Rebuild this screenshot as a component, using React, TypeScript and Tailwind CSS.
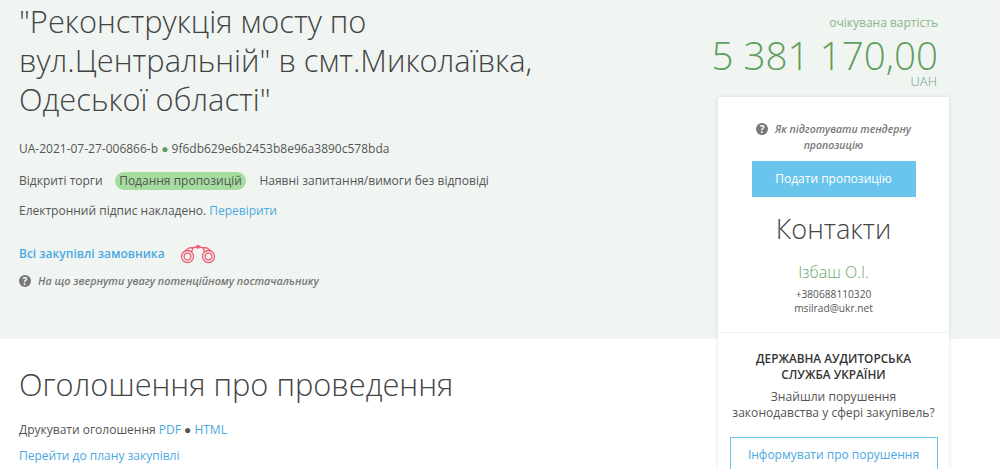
export default function App() {
  const font = { fontFamily: '"Open Sans", sans-serif' };
  return (
    <div style={font} className="w-[1000px] h-[469px] overflow-hidden bg-white text-[#555] relative">
      <div className="h-[339px] bg-[#f0f5f2] flex justify-between pl-[19px]">
        <div className="w-[600px]">
          <h1 className="mt-[2px] w-[530px] text-[30.8px] leading-[39px] font-light text-[#444]">"Реконструкція мосту по вул.Центральній" в смт.Миколаївка, Одеської області"</h1>
          <div className="mt-[21px] text-[12px] leading-[18px]">UA-2021-07-27-006866-b <span className="text-[#5c9e5c]">●</span> 9f6db629e6b2453b8e96a3890c578bda</div>
          <div className="mt-[14px] flex items-center text-[12px] leading-[18px]">
            <span>Відкриті торги</span>
            <span className="ml-[12px] bg-[#a5dc9f] rounded-full px-[4.5px]">Подання пропозицій</span>
            <span className="ml-[13px]">Наявні запитання/вимоги без відповіді</span>
          </div>
          <div className="mt-[12px] text-[12px] leading-[18px]">Електронний підпис накладено. <span className="text-[#4ba9e0]">Перевірити</span></div>
          <div className="mt-[24px] flex items-center text-[12px] leading-[18px] font-semibold text-[#4ba9e0]">
            <span>Всі закупівлі замовника</span>
            <svg className="ml-[15px]" width="36" height="20" viewBox="0 0 36 20" fill="none" stroke="#ee5f78" strokeWidth="1.3">
              <circle cx="7.5" cy="12.5" r="6" />
              <circle cx="7.5" cy="12.5" r="3.4" />
              <circle cx="28.5" cy="12.5" r="6" />
              <circle cx="28.5" cy="12.5" r="3.4" />
              <path d="M5 7 L9 4 L14 3.5 L18 2.5 L22 3.5 L27 4 L31 7" />
              <path d="M13 4 L11.5 8 M23 4 L24.5 8" />
              <circle cx="18" cy="2.8" r="1.3" fill="#ee5f78" />
            </svg>
          </div>
          <div className="mt-[8px] flex items-center text-[10.8px] leading-[18px] italic font-semibold text-[#777]">
            <span className="not-italic w-[12px] h-[12px] rounded-full bg-[#777] text-white text-[10px] leading-[12px] text-center font-bold">?</span>
            <span className="ml-[7px]">На що звернути увагу потенційному постачальнику</span>
          </div>
        </div>
        <div className="w-[282px] pr-[62px] flex flex-col items-end">
          <div className="mt-[14px] text-[12px] leading-[18px] text-[#8db48d]">очікувана вартість</div>
          <div className="mt-[4px] text-[38.6px] leading-[38px] font-light text-[#5f9f5f] whitespace-nowrap">5 381 170,00</div>
          <div className="text-[13px] leading-[14px] font-light text-[#6f9f7f] pr-[1px]">UAH</div>
        </div>
      </div>
      <div className="pl-[19px] pt-[25px]">
        <h2 className="text-[30.8px] leading-[40px] font-light text-[#444]">Оголошення про проведення</h2>
        <div className="mt-[17px] text-[12px] leading-[18px]">Друкувати оголошення <span className="text-[#4ba9e0]">PDF</span> ● <span className="text-[#4ba9e0]">HTML</span></div>
        <div className="mt-[8px] text-[12px] leading-[18px] text-[#4ba9e0]">Перейти до плану закупівлі</div>
      </div>
      <aside className="absolute left-[718px] top-[97px] w-[231px] h-[400px] bg-white shadow-[0_0_4px_rgba(0,0,0,0.1)]">
        <div className="h-[235px] flex flex-col items-center">
          <div className="mt-[24px] w-[170px] text-center text-[10.5px] leading-[16px] italic font-semibold text-[#777]">
            <span className="not-italic inline-block w-[12px] h-[12px] rounded-full bg-[#777] text-white text-[10px] leading-[12px] text-center font-bold mr-[7px]">?</span>
            Як підготувати тендерну пропозицію
          </div>
          <div className="mt-[8px] w-[164px] h-[36px] bg-[#6ac5ec] text-white text-[12px] leading-[36px] text-center">Подати пропозицію</div>
          <div className="mt-[13px] text-[27.2px] leading-[38px] font-light text-[#444]">Контакти</div>
          <div className="mt-[13px] text-[16px] leading-[22px] text-[#6aa56a] font-light">Ізбаш О.І.</div>
          <div className="mt-[4px] text-[10.2px] leading-[14px]">+380688110320</div>
          <div className="text-[10.2px] leading-[14px]">msilrad@ukr.net</div>
        </div>
        <div className="border-t border-[#f0f0f0] flex flex-col items-center">
          <div className="mt-[17px] w-[200px] text-center text-[11.8px] leading-[16px] font-semibold text-[#333]">ДЕРЖАВНА АУДИТОРСЬКА СЛУЖБА УКРАЇНИ</div>
          <div className="mt-[7px] w-[210px] text-center text-[12.1px] leading-[16px]">Знайшли порушення законодавства у сфері закупівель?</div>
          <div className="mt-[16px] w-[208px] h-[36px] border border-[#6ac5ec] text-[#4ba9e0] text-[12px] leading-[34px] text-center">Інформувати про порушення</div>
        </div>
      </aside>
    </div>
  );
}
